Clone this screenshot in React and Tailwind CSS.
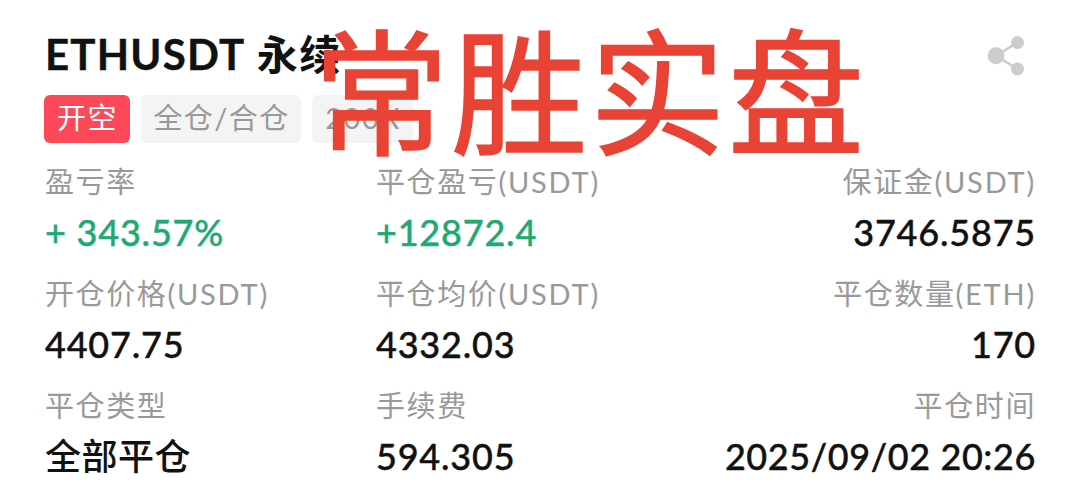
import React from 'react';

const rows = [
  [
    { label: '盈亏率', value: '+ 343.57%', color: 'text-[#21a973]' },
    { label: '平仓盈亏', unit: '(USDT)', value: '+12872.4', color: 'text-[#21a973]' },
    { label: '保证金', unit: '(USDT)', value: '3746.5875' },
  ],
  [
    { label: '开仓价格', unit: '(USDT)', value: '4407.75' },
    { label: '平仓均价', unit: '(USDT)', value: '4332.03' },
    { label: '平仓数量', unit: '(ETH)', value: '170' },
  ],
  [
    { label: '平仓类型', value: '全部平仓', style: 'tracking-[0.5px]' },
    { label: '手续费', value: '594.305' },
    { label: '平仓时间', value: '2025/09/02 20:26', style: 'tracking-[0.6px] [-webkit-text-stroke:0.4px_currentColor]' },
  ],
];

const numberStyle = 'tracking-[0.8px] [-webkit-text-stroke:0.4px_currentColor]';

function ShareIcon() {
  return (
    <svg width="38" height="40" viewBox="0 0 38 40" fill="#cccccc" stroke="#cccccc">
      <path d="M30.5 6.5 9 19.7l21.500 13.300" fill="none" strokeWidth="2.500" />
      <circle cx="9" cy="19.700" r="8.500" stroke="none" />
      <circle cx="30.500" cy="6.500" r="6.500" stroke="none" />
      <circle cx="30.500" cy="33" r="6.500" stroke="none" />
    </svg>
  );
}

function Cell({ item, right }) {
  return (
    <div className={right ? 'flex flex-col items-end' : 'flex flex-col items-start'}>
      <div className="h-[51px] leading-[52px] text-[29px] tracking-[1.6px] text-[#999999]">
        {item.label}
        {item.unit && <span className="tracking-[1.8px]">{item.unit}</span>}
      </div>
      <div className={`h-[53px] leading-[51px] text-[36px] font-medium ${item.style || numberStyle} ${item.color || 'text-[#111111]'}`}>
        {item.value}
      </div>
    </div>
  );
}

function App() {
  return (
    <div className="relative w-[1080px] h-[491px] overflow-hidden bg-white pl-[45px] pr-[44px] whitespace-nowrap font-[Lato,'Noto_Sans_CJK_SC',sans-serif]">
      <div className="flex items-start justify-between pt-[28px]">
        <h1 className="h-[52px] leading-[52px] text-[41px] font-bold tracking-[1.4px] text-[#111111]">
          <span className="text-[42px] tracking-[1.2px] [-webkit-text-stroke:0.4px_currentColor]">ETHUSDT</span> 永续
        </h1>
        <div className="pt-[8px] pr-[11px]">
          <ShareIcon />
        </div>
      </div>

      <div className="flex gap-[11px] -ml-px mt-[15px] h-[48px] leading-[45px] text-[29px] tracking-[1.6px]">
        <span className="w-[86px] rounded-md bg-[#fc4858] pl-px text-center text-white">开空</span>
        <span className="w-[160px] rounded-md bg-[#f4f4f4] pl-px text-center tracking-[1.4px] text-[#999999]">全仓/合仓</span>
        <span className="w-[101px] rounded-md bg-[#f4f4f4] pl-px text-center text-[#999999]">200X</span>
      </div>

      <div className="mt-[13px] flex flex-col gap-[8px]">
        {rows.map((row) => (
          <div key={row[0].label} className="grid grid-cols-[331px_300px_1fr]">
            {row.map((item, i) => (
              <Cell key={item.label} item={item} right={i === 2} />
            ))}
          </div>
        ))}
      </div>

      <div className="absolute left-[313px] top-[18px] h-[150px] leading-[150px] text-[136px] tracking-[2.3px] text-[#e94335] [-webkit-text-stroke:1.6px_#e94335]">
        常胜实盘
      </div>
    </div>
  );
}

export default App;
